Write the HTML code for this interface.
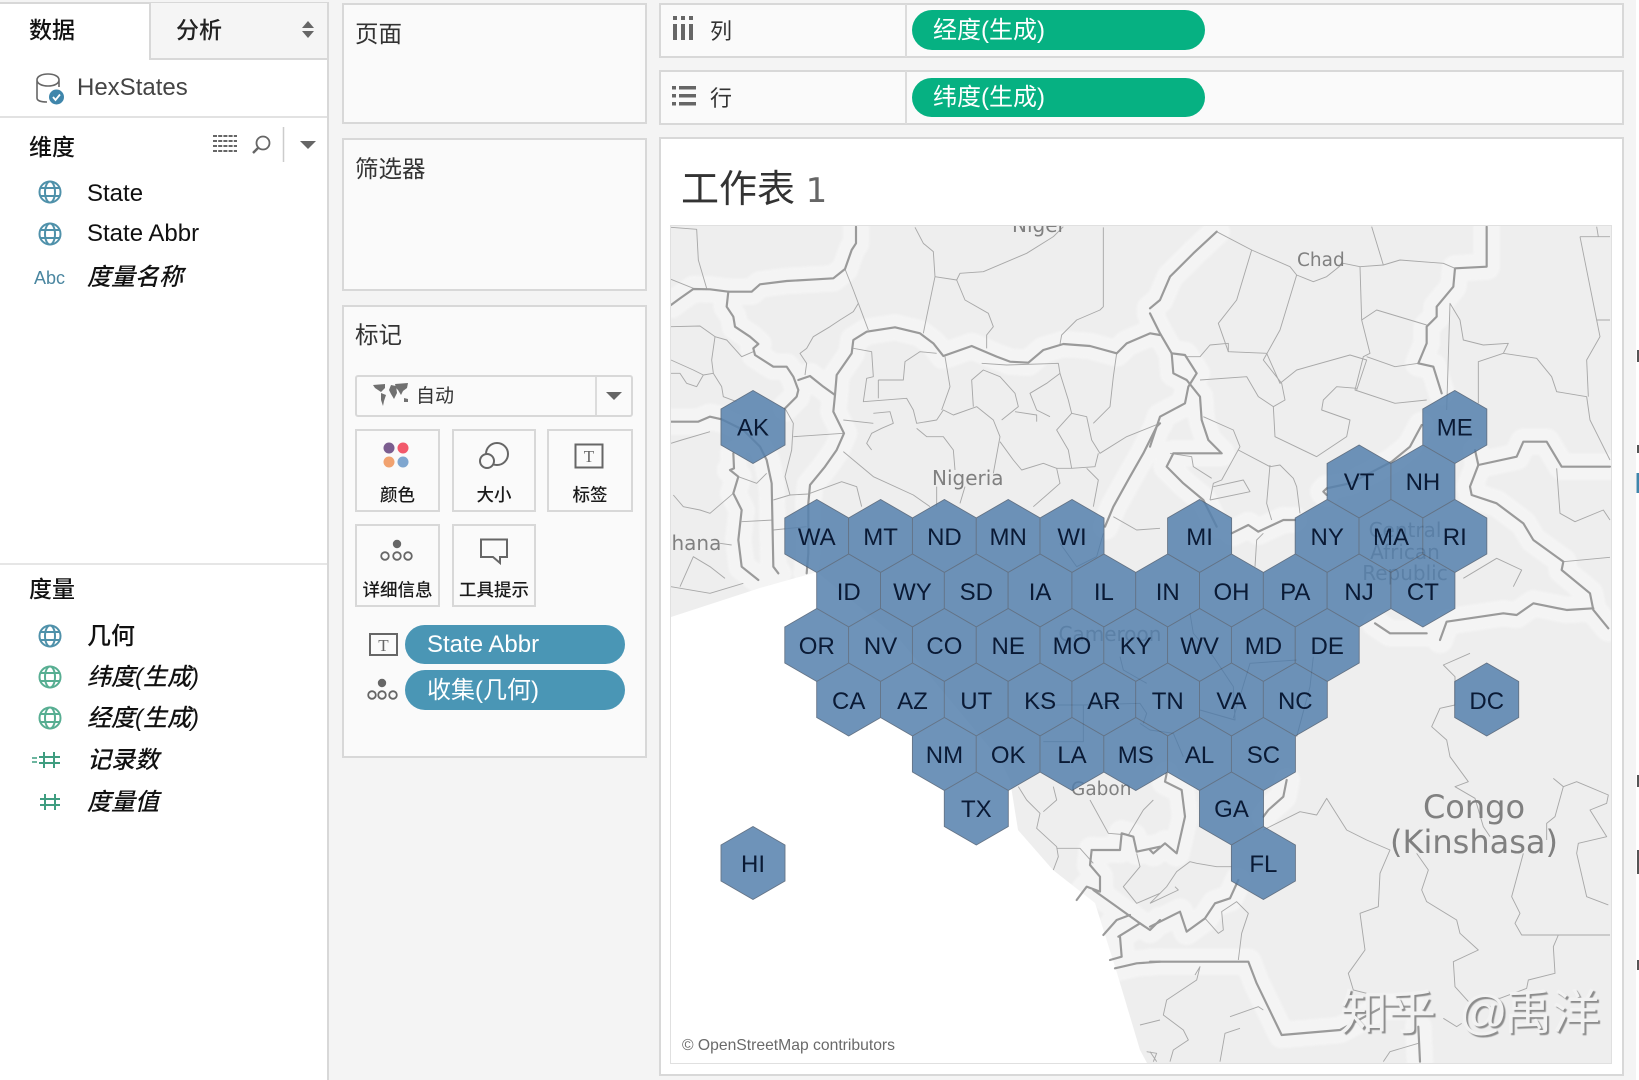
<!DOCTYPE html>
<html lang="zh-CN"><head><meta charset="utf-8"><title>工作表 1</title>
<style>
html,body{margin:0;padding:0;width:1639px;height:1080px;overflow:hidden;background:#f4f4f4}
body{position:relative;font-family:"Liberation Sans","Noto Sans CJK SC",sans-serif;color:#222}
.b{position:absolute;box-sizing:border-box;background:#fafafa;border:2px solid #d8d8d8}
.t{position:absolute;line-height:1;white-space:nowrap}
.i{font-style:italic;color:#111;font-weight:500}
.m{font-weight:500}
.p{position:absolute;border-radius:21px}
.w{color:#fff;font-size:24px}
.c{position:absolute;box-sizing:border-box;background:#fafafa;border:2px solid #d8d8d8}
.l{font-size:17.5px;font-weight:500;color:#1a1a1a;text-align:center}
.wm{position:absolute;line-height:1;white-space:nowrap;font-size:48px;color:#f2f2f2;text-shadow:2px 2px 1px #8c8c8c}
svg text{font-family:"DejaVu Sans",sans-serif;fill:#808080}
#h text{font-family:"Liberation Sans",sans-serif;font-size:24px;fill:#0a1a35;text-anchor:middle}
</style></head><body>

<!-- left panel -->
<div style="position:absolute;left:0;top:2px;width:329px;height:1078px;background:#fff;border-right:2px solid #d8d8d8;border-top:2px solid #d8d8d8;box-sizing:border-box"></div>
<div style="position:absolute;left:149px;top:3px;width:178px;height:57px;background:#f5f5f5;border-left:2px solid #d8d8d8;border-bottom:2px solid #d8d8d8;box-sizing:border-box"></div>
<div style="position:absolute;left:0;top:116px;width:327px;height:2px;background:#e2e2e2"></div>
<div style="position:absolute;left:0;top:563px;width:327px;height:2px;background:#e6e6e6"></div>
<div class="t m" style="left:29px;top:19px;font-size:23px;color:#111">数据</div>
<div class="t m" style="left:176px;top:19px;font-size:23px;color:#222">分析</div>
<div class="t" style="left:77px;top:76px;font-size:24px;color:#444">HexStates</div>
<div class="t m" style="left:29px;top:136px;font-size:23px;color:#111">维度</div>
<div class="t" style="left:87px;top:182px;font-size:24px;color:#111">State</div>
<div class="t" style="left:87px;top:222px;font-size:24px;color:#111">State Abbr</div>
<div class="t" style="left:34px;top:269px;font-size:18px;color:#4a86a0">Abc</div>
<div class="t i" style="left:87px;top:266px;font-size:24px">度量名称</div>
<div class="t m" style="left:29px;top:578px;font-size:23px;color:#111">度量</div>
<div class="t m" style="left:87px;top:625px;font-size:24px;color:#111">几何</div>
<div class="t i" style="left:87px;top:666px;font-size:24px">纬度(生成)</div>
<div class="t i" style="left:87px;top:707px;font-size:24px">经度(生成)</div>
<div class="t i" style="left:87px;top:749px;font-size:24px">记录数</div>
<div class="t i" style="left:87px;top:791px;font-size:24px">度量值</div>

<!-- middle -->
<div class="b" style="left:342px;top:3px;width:305px;height:121px"></div>
<div class="b" style="left:342px;top:138px;width:305px;height:153px"></div>
<div class="b" style="left:342px;top:305px;width:305px;height:453px"></div>
<div class="t" style="left:355px;top:23px;font-size:23.5px;color:#333">页面</div>
<div class="t" style="left:355px;top:158px;font-size:23.5px;color:#333">筛选器</div>
<div class="t" style="left:355px;top:324px;font-size:23.5px;color:#333">标记</div>
<div class="c" style="left:355px;top:375px;width:278px;height:42px;border-radius:3px"></div>
<div style="position:absolute;left:595px;top:377px;width:2px;height:38px;background:#dcdcdc"></div>
<div class="t" style="left:416px;top:387px;font-size:19px;color:#333">自动</div>
<div class="c" style="left:355px;top:429px;width:85px;height:83px"></div>
<div class="c" style="left:452px;top:429px;width:84px;height:83px"></div>
<div class="c" style="left:547px;top:429px;width:86px;height:83px"></div>
<div class="c" style="left:355px;top:524px;width:85px;height:83px"></div>
<div class="c" style="left:452px;top:524px;width:84px;height:83px"></div>
<div class="t l" style="left:355px;top:487px;width:85px">颜色</div>
<div class="t l" style="left:452px;top:487px;width:84px">大小</div>
<div class="t l" style="left:547px;top:487px;width:86px">标签</div>
<div class="t l" style="left:355px;top:582px;width:85px">详细信息</div>
<div class="t l" style="left:452px;top:582px;width:84px">工具提示</div>
<div class="p" style="left:405px;top:625px;width:220px;height:39px;background:#4a96b5"></div>
<div class="p" style="left:405px;top:670px;width:220px;height:40px;background:#4a96b5"></div>
<div class="t w" style="left:427px;top:633px">State Abbr</div>
<div class="t w" style="left:427px;top:679px">收集(几何)</div>

<!-- shelves -->
<div class="b" style="left:659px;top:3px;width:965px;height:55px"></div>
<div class="b" style="left:659px;top:70px;width:965px;height:55px"></div>
<div style="position:absolute;left:905px;top:4px;width:2px;height:53px;background:#dcdcdc"></div>
<div style="position:absolute;left:905px;top:71px;width:2px;height:53px;background:#dcdcdc"></div>
<div class="t" style="left:710px;top:21px;font-size:22px;color:#333">列</div>
<div class="t" style="left:710px;top:88px;font-size:22px;color:#333">行</div>
<div class="p" style="left:912px;top:10px;width:293px;height:40px;background:#06b182"></div>
<div class="p" style="left:912px;top:78px;width:293px;height:39px;background:#06b182"></div>
<div class="t w" style="left:933px;top:19px">经度(生成)</div>
<div class="t w" style="left:933px;top:86px">纬度(生成)</div>

<!-- viz -->
<div class="b" style="left:659px;top:137px;width:965px;height:939px;background:#fff"></div>
<div class="t" style="left:681px;top:171px;font-size:38px;color:#333">工作表 <span style="font-family:'DejaVu Sans',sans-serif;font-size:34px;color:#666;font-weight:400">1</span></div>

<svg width="1639" height="1080" viewBox="0 0 1639 1080" style="position:absolute;left:0;top:0">
<defs>
<filter id="soft" x="-2%" y="-2%" width="104%" height="104%"><feGaussianBlur stdDeviation=".35"/></filter>
<filter id="band" x="-2%" y="-2%" width="104%" height="104%"><feGaussianBlur stdDeviation="1.2"/></filter>
<g id="gl" fill="none" stroke-width="2"><circle r="10.5"/><ellipse rx="5" ry="10.5"/><path d="M-10-4H10M-10 4H10"/></g>
<polygon id="x" points="0,-36.5 32,-18 32,18 0,36.5 -32,18 -32,-18"/>
<g id="thick" fill="none" stroke-linejoin="round" stroke-linecap="round">
<g transform="translate(660 220) scale(.33333)">
<path d="M33 255L60 235L100 207L150 208L205 215L275 215L300 193L380 183L470 178L520 175L555 147L575 90L588 70L588 20"/>
<path d="M205 215L200 260L220 290L225 320L270 350L295 372L280 385L285 405L340 440L380 440L400 470L415 510L410 530L375 565"/>
<path d="M415 480L450 468L490 500L525 525L530 465L575 400L580 360L620 335L705 322L780 340L820 370L850 408L935 378L1010 410L1050 425L1105 428L1150 390L1210 372L1290 378L1370 400L1400 370L1470 340L1500 345"/>
<path d="M525 525L520 575L552 640L530 690L495 740L450 795L445 850L445 1000L440 1060"/>
<path d="M33 605L115 605L150 590L185 598L250 630L300 680L320 720L335 790L340 1040L355 1060"/>
<path d="M220 700L222 745L210 750L235 770L220 820L245 870L235 960L245 1040L295 1080"/>
<path d="M1335 920L1360 860L1410 770L1450 700L1490 620L1500 610"/>
</g>
<g transform="translate(1150 220) scale(.33333)">
<path d="M200 35L130 100L60 170L30 240L0 265"/>
<path d="M0 280L30 340L65 400L105 405L140 460L115 500L105 550L30 590L0 680"/>
<path d="M65 400L70 460L110 480L150 530L155 600L175 660L215 700L70 700L50 740L100 790L160 840L200 920"/>
<path d="M245 940L295 915L325 935L400 900L435 900"/>
<path d="M1010 20L1010 140L915 145L910 200L860 260L860 290L830 320L830 370L805 430L850 440L875 520"/>
<path d="M815 615L780 680L725 725L600 790L530 805L520 815L530 825"/>
<path d="M975 690L985 735L1100 710L1120 665L1190 665L1235 740L1380 740"/>
<path d="M985 735L960 800L965 825L1040 850L1120 910L1150 960L1240 1025L1235 1050L1320 1120L1330 1170L1375 1225"/>
<path d="M870 1260L890 1205L1060 1180L1100 1185L1150 1150L1250 1170L1330 1165"/>
<path d="M675 1210L720 1240L830 1240"/>
</g>
<g transform="translate(660 640) scale(.33333)">
<path d="M1295 630L1380 630L1385 580L1420 590L1430 635L1500 620"/>
<path d="M1295 630L1290 675L1320 710L1320 755L1280 740L1250 780"/>
<path d="M1300 750L1370 800L1440 850L1470 870L1500 840"/>
<path d="M1330 885L1370 840L1410 825"/>
<path d="M1375 890L1440 850"/>
<path d="M1350 960L1385 950L1380 890"/>
<path d="M1365 985L1430 970L1500 965"/>
</g>
<g transform="translate(1150 640) scale(.33333)">
<path d="M0 860L90 815L110 875L165 835L195 790L240 775L265 720"/>
<path d="M50 400L45 425L95 450L105 530L80 640L45 610L10 640L0 630"/>
<path d="M410 420L400 470L355 510L340 530"/>
<path d="M0 965L295 965L320 1030L395 1185L570 1170L700 1100L790 1100"/>
<path d="M805 1160L810 1265"/>
</g>
</g>
</defs>

<!-- ui icons -->
<path d="M302 28L308 21L314 28ZM302 31L308 38L314 31Z" fill="#666"/>
<path d="M37 80C37 72 59 72 59 80C59 88 37 88 37 80ZM37 80V98C37 101 42 102 47 102M59 80V87" fill="none" stroke="#666" stroke-width="1.6"/>
<circle cx="56.5" cy="97" r="7.5" fill="#3f86ab"/><path d="M53 97L55.5 100L60 94.5" fill="none" stroke="#fff" stroke-width="1.8"/>
<g stroke="#666" stroke-width="2" stroke-dasharray="4 1.2" fill="none"><path d="M213 136H237M213 141H237M213 146H237M213 151H237"/></g>
<circle cx="263" cy="143" r="6.5" fill="none" stroke="#666" stroke-width="1.8"/><path d="M258 148L253 153" stroke="#666" stroke-width="2.4"/>
<path d="M283.5 127V162" stroke="#ccc" stroke-width="1.5"/><path d="M300 141H316L308 149Z" fill="#666"/>
<g stroke="#4f91aa"><use href="#gl" x="50" y="192"/><use href="#gl" x="50" y="234"/><use href="#gl" x="50" y="636"/></g>
<g stroke="#57ae92"><use href="#gl" x="50" y="677"/><use href="#gl" x="50" y="718"/></g>
<g stroke="#3f9d80" stroke-width="2" fill="none"><path d="M44 752V768M54 752V768M39 757H60M39 763H60"/><path d="M32 758H37M32 762H37" stroke-width="1.5"/><path d="M45 794V810M55 794V810M40 799H60M40 805H60"/></g>

<!-- shelf icons -->
<g fill="#666"><rect x="673" y="24" width="4" height="16"/><rect x="681" y="24" width="4" height="16"/><rect x="689" y="24" width="4" height="16"/><rect x="673" y="16" width="4" height="4"/><rect x="681" y="16" width="4" height="4"/><rect x="689" y="16" width="4" height="4"/>
<rect x="672" y="86" width="4" height="3.5"/><rect x="679" y="86" width="17" height="3.5"/><rect x="672" y="94" width="4" height="3.5"/><rect x="679" y="94" width="17" height="3.5"/><rect x="672" y="102" width="4" height="3.5"/><rect x="679" y="102" width="17" height="3.5"/></g>

<!-- marks icons -->
<g fill="#707070"><path d="M373 385L385 384L385 388L381 392L378 390L375 388Z"/><path d="M381 393L386 395L384 401L383 406L381 400Z"/><path d="M391 385L396 386L397 393L394 399L391 394L389 390Z"/><path d="M395 384L408 383L407 388L403 391L401 395L398 390L396 388Z"/><path d="M404 398L408 399L408 402L404 402Z"/></g>
<path d="M606 392H622L614 400Z" fill="#666"/>
<circle cx="389" cy="448" r="5.5" fill="#7b5d8f"/><circle cx="403" cy="448" r="5.5" fill="#f2596b"/><circle cx="389" cy="462" r="5.5" fill="#f1a26f"/><circle cx="403" cy="462" r="5.5" fill="#7fa6cf"/>
<circle cx="497" cy="454" r="11" fill="none" stroke="#666" stroke-width="2"/><circle cx="487" cy="461" r="7" fill="#fafafa" stroke="#666" stroke-width="2"/>
<g fill="none" stroke="#666"><rect x="575.5" y="444.5" width="27" height="23" stroke-width="2"/><rect x="370" y="634" width="27" height="21" stroke-width="2"/>
<circle cx="385" cy="556" r="3.8" stroke-width="1.8"/><circle cx="397" cy="556" r="3.8" stroke-width="1.8"/><circle cx="408" cy="556" r="3.8" stroke-width="1.8"/>
<circle cx="372" cy="695" r="3.8" stroke-width="1.8"/><circle cx="382" cy="695" r="3.8" stroke-width="1.8"/><circle cx="393" cy="695" r="3.8" stroke-width="1.8"/>
<path d="M481 539.5H507V557H500V563L493 557H481Z" stroke-width="2"/></g>
<circle cx="397" cy="544" r="4.2" fill="#666"/><circle cx="382" cy="683" r="4.2" fill="#666"/>
<text x="589" y="462" text-anchor="middle" style="font-family:'Liberation Serif',serif;font-size:17px;fill:#666">T</text>
<text x="383.5" y="651" text-anchor="middle" style="font-family:'Liberation Serif',serif;font-size:17px;fill:#666">T</text>

<!-- map -->
<svg x="671" y="226" width="940" height="837" viewBox="671 226 940 837">
<rect x="671" y="226" width="940" height="837" fill="#eeeeee"/>
<use href="#thick" stroke="#f4f4f4" stroke-width="80" filter="url(#band)"/>
<path d="M1010 780L1018 830L1053 870L1095 903L1117 973L1140 1050L1147 1063H671V617L760 588L817 572L900 640L1000 760Z" fill="#fff"/>
<g filter="url(#soft)">
<g fill="none" stroke="#a8a8a8" stroke-width="2.8" stroke-linejoin="round">
<g transform="translate(660 220) scale(.33333)">
<path d="M33 22L110 28L115 120L140 205"/><path d="M33 178L100 205"/>
<path d="M33 320L120 318L165 350L155 420L160 460L185 500L190 530L230 545"/>
<path d="M165 350L200 360L245 410L280 395"/><path d="M33 420L100 450L130 465L160 460"/>
<path d="M33 460L60 460L80 490L110 500L130 465"/><path d="M33 670L65 660L150 635"/>
<path d="M555 147L580 210L595 250L580 275L540 300L510 320L460 350L440 385L420 400L440 430L435 465"/>
<path d="M595 250L625 330"/><path d="M765 22L790 70L820 95L825 170L800 290L790 340"/>
<path d="M825 170L890 180L900 160L970 155L1100 100L1180 50L1210 20"/>
<path d="M890 180L915 240L985 280L1000 320L980 345L980 385"/>
<path d="M1330 22L1330 260L1320 270L1250 300L1205 345L1200 372"/>
<path d="M580 385L635 395L640 470L620 475L610 545L740 535L760 570L770 610L830 600L850 570L880 585L950 560L1000 600L1020 650L1000 760"/>
<path d="M855 410L870 500L845 570"/><path d="M655 480L730 480L735 425L780 395L830 400"/><path d="M655 480L655 535"/>
<path d="M640 580L690 575L700 610L665 625L635 640L620 670L635 690"/>
<path d="M770 625L800 650L850 650L880 690L885 750"/>
<path d="M940 560L935 480L970 450L1020 470L1065 520L1075 560L1025 600"/>
<path d="M965 430L1040 435L1195 430L1200 460L1160 490L1110 520L1130 570L1170 590"/>
<path d="M1065 575L1130 585L1130 605"/>
<path d="M1200 460L1225 540L1235 580L1190 630L1225 690L1235 745L1190 745L1150 730L1085 750L1060 720L1020 665"/>
<path d="M1235 580L1280 590L1295 660L1320 700L1400 650L1500 610"/>
<path d="M1370 400L1360 470L1350 560L1300 610"/><path d="M1315 700L1305 740L1235 745"/>
<path d="M1280 745L1315 780L1300 860"/><path d="M1190 745L1200 790L1120 860"/>
<path d="M550 695L640 770L760 825L810 860"/><path d="M550 600L640 610"/><path d="M400 650L550 640"/>
<path d="M375 565L400 610L395 690L375 770L390 825L445 822"/><path d="M390 825L340 840"/>
<path d="M340 930L440 920"/><path d="M245 905L340 900"/><path d="M450 820L545 785L590 800L605 860"/>
<path d="M235 770L290 790L320 760"/><path d="M220 820L150 880L120 870L70 860L40 825"/>
<path d="M1360 890L1430 930L1500 925"/><path d="M180 970L215 975"/>
<path d="M60 1100L100 1010L150 1040L195 1075"/><path d="M33 1100L150 1120L250 1090"/>
<path d="M830 800V860M915 800L900 850"/>
</g>
<g transform="translate(1150 220) scale(.33333)">
<path d="M200 35L305 90L420 140L440 165L490 185L530 170L580 130L630 140L700 135L665 20"/>
<path d="M700 135L750 120L880 130L915 145"/><path d="M630 140L635 300L680 270L830 315"/>
<path d="M635 300L660 400L640 410L615 510L735 550L830 540"/><path d="M650 410L735 440L805 430"/>
<path d="M305 90L260 240L205 310L235 395L350 400L390 490L440 450L600 405L650 420L620 510"/>
<path d="M440 165L390 330L340 420L395 490L405 540L370 560L375 650L500 710L590 650L600 600L515 570L520 540L560 500L620 505"/>
<path d="M235 395L235 370L180 375L150 410L110 410"/><path d="M150 480L290 470L325 530L370 560"/>
<path d="M160 590L250 630L270 680L215 780L190 790L180 840"/><path d="M60 700L125 710L130 740L185 775"/>
<path d="M265 690L360 740L390 735L430 775L440 800L450 880"/><path d="M360 735L350 850L365 900"/>
<path d="M190 800L280 780L300 815L180 840"/>
<path d="M890 570L900 250L930 300L940 360L1000 375L1075 370L1060 400L985 425L985 550"/>
<path d="M1060 400L1160 415L1205 470L1220 515L1310 530L1320 600L1340 640L1380 720"/>
<path d="M1290 50H1380"/><path d="M1290 50L1340 300H1380"/><path d="M1340 20L1345 50"/>
<path d="M1340 300L1350 350L1310 420L1315 530"/><path d="M1220 745L1230 880L1275 905L1360 870L1380 900"/>
<path d="M1240 1025L1380 1012"/><path d="M315 1040L320 960L340 940"/>
<path d="M940 1075L1040 1015L1115 1050L1090 1100"/>
</g>
<g transform="translate(660 640) scale(.33333)">
<path d="M1075 440L1100 480L1140 520L1130 565L1190 620L1195 650L1180 690"/>
<path d="M1190 625L1260 625L1300 670"/><path d="M1180 440L1190 480L1150 515"/>
<path d="M1290 480L1345 580L1405 585L1450 510L1480 480"/>
<path d="M1430 640L1440 680L1390 740L1430 790L1500 760"/>
<path d="M1440 1155L1500 1140"/><path d="M1460 1235L1490 1240L1480 1265"/>
</g>
<g transform="translate(1150 640) scale(.33333)">
<path d="M960 40L880 75L915 110L915 195L870 205L845 260L890 300L900 350L955 425L915 440L975 475L1000 560L1020 590"/>
<path d="M340 570L450 515L500 525L530 475L590 570L650 600L720 630L690 700L685 800L630 820L645 930L595 1000L610 1050L650 1060"/>
<path d="M800 640L835 690L815 750L830 785L920 840L930 880L985 930L910 965L915 1040L960 1090"/>
<path d="M1120 640L1085 770L1110 820L1095 850L1115 885H1380"/>
<path d="M1225 885L1210 920L1215 1000L1135 1020L1130 1045L1050 1075L1000 1075"/>
<path d="M1210 415L1240 440L1280 425L1375 465L1370 490L1320 510L1370 590L1285 610L1280 640L1310 770L1375 795"/>
<path d="M1240 440L1215 530L1190 550L1190 600"/>
<path d="M135 1005L150 980L140 1020L50 1080L40 1125L100 1170L115 1200L70 1230L60 1265"/>
<path d="M240 1130L325 1100L340 1110"/><path d="M210 1265L225 1180L270 1165"/><path d="M0 1235L20 1265"/>
<path d="M700 1265L720 1235L805 1210"/><path d="M265 960L275 880L295 820L260 785L215 815L220 870L205 880L165 835"/>
<path d="M245 680L200 680L140 670L120 665L80 695L50 740L0 790"/><path d="M0 790L85 750L75 740"/>
<path d="M880 1135L920 1160L935 1150"/>
</g>
<g transform="translate(1000 500) scale(.33333)" stroke="#8f8f8f">
<path d="M180 130L230 200L290 170L310 100"/><path d="M100 615H250V725H130"/><path d="M250 615L420 610L440 640L430 670"/>
<path d="M570 340L580 400L640 470L700 560L705 660L600 630"/><path d="M700 655L750 490L890 480"/>
<path d="M940 470L930 560L890 710"/><path d="M420 670L450 690L520 700L550 770"/><path d="M360 470L370 510L440 550"/>
</g>
</g>
<use href="#thick" stroke="#9a9a9a" stroke-width="6.5"/>
</g>
<text x="1012" y="232" font-size="20">Niger</text>
<text x="1297" y="266" font-size="18.5">Chad</text>
<text x="932" y="485" font-size="20">Nigeria</text>
<text x="656" y="550" font-size="20">Ghana</text>
<text x="1110" y="641" font-size="20" text-anchor="middle">Cameroon</text>
<text x="1405" y="537" font-size="20" text-anchor="middle">Central</text>
<text x="1405" y="559" font-size="20" text-anchor="middle">African</text>
<text x="1405" y="580" font-size="20" text-anchor="middle">Republic</text>
<text x="1071" y="795" font-size="18.5">Gabon</text>
<text x="1474" y="818" font-size="32" text-anchor="middle">Congo</text>
<text x="1474" y="853" font-size="32" text-anchor="middle">(Kinshasa)</text>

<g opacity=".85" fill="#5480ad" stroke="#4a5c72" stroke-width=".9">
<use href="#x" x="753" y="427"/><use href="#x" x="1454.8" y="427"/>
<use href="#x" x="1359.1" y="481.5"/><use href="#x" x="1422.9" y="481.5"/>
<use href="#x" x="816.8" y="536"/><use href="#x" x="880.6" y="536"/><use href="#x" x="944.4" y="536"/><use href="#x" x="1008.2" y="536"/><use href="#x" x="1072" y="536"/><use href="#x" x="1199.6" y="536"/><use href="#x" x="1327.2" y="536"/><use href="#x" x="1391" y="536"/><use href="#x" x="1454.8" y="536"/>
<use href="#x" x="848.7" y="590.5"/><use href="#x" x="912.5" y="590.5"/><use href="#x" x="976.3" y="590.5"/><use href="#x" x="1040.1" y="590.5"/><use href="#x" x="1103.9" y="590.5"/><use href="#x" x="1167.7" y="590.5"/><use href="#x" x="1231.5" y="590.5"/><use href="#x" x="1295.3" y="590.5"/><use href="#x" x="1359.1" y="590.5"/><use href="#x" x="1422.9" y="590.5"/>
<use href="#x" x="816.8" y="645"/><use href="#x" x="880.6" y="645"/><use href="#x" x="944.4" y="645"/><use href="#x" x="1008.2" y="645"/><use href="#x" x="1072" y="645"/><use href="#x" x="1135.8" y="645"/><use href="#x" x="1199.6" y="645"/><use href="#x" x="1263.4" y="645"/><use href="#x" x="1327.2" y="645"/>
<use href="#x" x="848.7" y="699.5"/><use href="#x" x="912.5" y="699.5"/><use href="#x" x="976.3" y="699.5"/><use href="#x" x="1040.1" y="699.5"/><use href="#x" x="1103.9" y="699.5"/><use href="#x" x="1167.7" y="699.5"/><use href="#x" x="1231.5" y="699.5"/><use href="#x" x="1295.3" y="699.5"/><use href="#x" x="1486.7" y="699.5"/>
<use href="#x" x="944.4" y="754"/><use href="#x" x="1008.2" y="754"/><use href="#x" x="1072" y="754"/><use href="#x" x="1135.8" y="754"/><use href="#x" x="1199.6" y="754"/><use href="#x" x="1263.4" y="754"/>
<use href="#x" x="976.3" y="808.5"/><use href="#x" x="1231.5" y="808.5"/>
<use href="#x" x="753" y="863"/><use href="#x" x="1263.4" y="863"/>
</g>
<g id="h">
<text x="753" y="435.5">AK</text><text x="1454.8" y="435.5">ME</text>
<text x="1359.1" y="490">VT</text><text x="1422.9" y="490">NH</text>
<text x="816.8" y="545">WA</text><text x="880.6" y="545">MT</text><text x="944.4" y="545">ND</text><text x="1008.2" y="545">MN</text><text x="1072" y="545">WI</text><text x="1199.6" y="545">MI</text><text x="1327.2" y="545">NY</text><text x="1391" y="545">MA</text><text x="1454.8" y="545">RI</text>
<text x="848.7" y="600">ID</text><text x="912.5" y="600">WY</text><text x="976.3" y="600">SD</text><text x="1040.1" y="600">IA</text><text x="1103.9" y="600">IL</text><text x="1167.7" y="600">IN</text><text x="1231.5" y="600">OH</text><text x="1295.3" y="600">PA</text><text x="1359.1" y="600">NJ</text><text x="1422.9" y="600">CT</text>
<text x="816.8" y="654">OR</text><text x="880.6" y="654">NV</text><text x="944.4" y="654">CO</text><text x="1008.2" y="654">NE</text><text x="1072" y="654">MO</text><text x="1135.8" y="654">KY</text><text x="1199.6" y="654">WV</text><text x="1263.4" y="654">MD</text><text x="1327.2" y="654">DE</text>
<text x="848.7" y="709">CA</text><text x="912.5" y="709">AZ</text><text x="976.3" y="709">UT</text><text x="1040.1" y="709">KS</text><text x="1103.9" y="709">AR</text><text x="1167.7" y="709">TN</text><text x="1231.5" y="709">VA</text><text x="1295.3" y="709">NC</text><text x="1486.7" y="709">DC</text>
<text x="944.4" y="763">NM</text><text x="1008.2" y="763">OK</text><text x="1072" y="763">LA</text><text x="1135.8" y="763">MS</text><text x="1199.6" y="763">AL</text><text x="1263.4" y="763">SC</text>
<text x="976.3" y="817">TX</text><text x="1231.5" y="817">GA</text>
<text x="753" y="872">HI</text><text x="1263.4" y="872">FL</text>
</g>
</svg>
<rect x="670.5" y="225.5" width="941" height="838" fill="none" stroke="#e0e0e0"/>
<!-- right edge sliver -->
<rect x="1636" y="0" width="3" height="1080" fill="#fff"/>
<g fill="#555"><rect x="1637" y="350" width="2" height="12"/><rect x="1637" y="445" width="2" height="8"/><rect x="1637" y="775" width="2" height="12"/><rect x="1637" y="850" width="2" height="24"/><rect x="1637" y="960" width="2" height="10"/></g>
<rect x="1636.5" y="473" width="2.5" height="20" fill="#3f86ab"/>
</svg>

<div class="t" style="left:682px;top:1038px;font-size:15.7px;color:#6a6a6a">© OpenStreetMap contributors</div>
<div class="wm" style="left:1340px;top:990px">知乎</div>
<div class="wm" style="left:1459px;top:990px">@</div>
<div class="wm" style="left:1504px;top:990px">禹洋</div>
</body></html>
